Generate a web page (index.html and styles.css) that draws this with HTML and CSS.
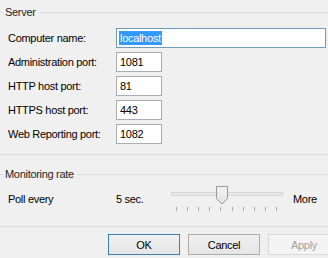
FILE: index.html
```html
<!DOCTYPE html>
<html>
<head>
    <meta charset="UTF-8">
    <title>Server settings</title>
    <link rel="stylesheet" href="styles.css">
</head>
<body>
    <div class="dialog">
        <div class="legend"><span>Server</span></div>
        <div class="fields">
            <div class="label">Computer name:</div>
            <div class="box wide focus"><span class="sel">localhost</span></div>
            <div class="label">Administration port:</div>
            <div class="box">1081</div>
            <div class="label">HTTP host port:</div>
            <div class="box">81</div>
            <div class="label">HTTPS host port:</div>
            <div class="box">443</div>
            <div class="label">Web Reporting port:</div>
            <div class="box">1082</div>
        </div>
        <div class="rule server-end"></div>

        <div class="legend monitor"><span>Monitoring rate</span></div>
        <div class="poll">
            <div class="label">Poll every</div>
            <div class="value">5 sec.</div>
            <div class="slider">
                <div class="track"></div>
                <svg class="thumb" width="12" height="19" viewBox="0 0 12 19">
                    <defs>
                        <linearGradient id="tg" x1="0" y1="0" x2="0" y2="1">
                            <stop offset="0" stop-color="#f2f2f2"/>
                            <stop offset="1" stop-color="#e2e2e2"/>
                        </linearGradient>
                    </defs>
                    <path d="M0.5 0.5 H11.5 V12.5 L6 18 L0.5 12.5 Z" fill="url(#tg)" stroke="#9a9a9a"/>
                </svg>
                <div class="ticks">
                    <i></i><i></i><i></i><i></i><i></i><i></i><i></i><i></i><i></i><i></i>
                </div>
            </div>
            <div class="more">More</div>
        </div>
        <div class="rule monitor-end"></div>

        <div class="buttons">
            <button class="btn default">OK</button>
            <button class="btn">Cancel</button>
            <button class="btn" disabled>Apply</button>
        </div>
    </div>
</body>
</html>
```

FILE: styles.css
```css
html, body {
    margin: 0;
    padding: 0;
    background: #f0f0f0;
}
body {
    width: 328px;
    height: 258px;
    overflow: hidden;
    font-family: "Liberation Sans", Arial, sans-serif;
    font-size: 11px;
    letter-spacing: -0.3px;
    color: #000;
}
.dialog {
    display: flex;
    flex-direction: column;
}

/* group box headers */
.legend {
    display: flex;
    align-items: center;
    gap: 2px;
    height: 24px;
    color: #1e1e1e;
}
.legend::before {
    content: "";
    width: 3px;
    height: 1px;
    background: #dcdcdc;
}
.legend::after {
    content: "";
    flex: 1;
    height: 1px;
    margin-left: 1px;
    background: #dcdcdc;
}
.legend.monitor {
    height: 22px;
    margin-top: 8px;
}
.rule {
    height: 1px;
    background: #dcdcdc;
}
.server-end {
    margin-top: 10px;
}
.monitor-end {
    margin-top: 14px;
}

/* server fields */
.fields {
    display: grid;
    grid-template-columns: 108px auto;
    grid-auto-rows: 20px;
    row-gap: 4px;
    margin-top: 4px;
    padding-left: 8px;
    align-items: center;
}
.box {
    box-sizing: border-box;
    width: 46px;
    height: 20px;
    padding: 2px 0 0 3px;
    background: #fff;
    border: 1px solid #abadb3;
    line-height: 14px;
}
.box.wide {
    width: 210px;
    padding-left: 2px;
}
.box.focus {
    border-color: #709cbb;
}
.sel {
    display: inline-block;
    background: #3399ff;
    color: #fff;
    padding: 0 1px;
}

/* monitoring rate */
.poll {
    display: grid;
    grid-template-columns: 108px 55px 112px auto;
    height: 26px;
    margin-top: 1px;
    padding-left: 8px;
    align-items: center;
}
.slider {
    position: relative;
    height: 26px;
}
.track {
    margin: 6px 0 0;
    height: 2px;
    background: #e7eaea;
    border: 1px solid #d6d6d6;
}
.thumb {
    position: absolute;
    left: 45px;
    top: 0;
}
.ticks {
    position: absolute;
    left: 5px;
    right: 6px;
    top: 21px;
    display: flex;
    justify-content: space-between;
}
.ticks i {
    width: 1px;
    height: 4px;
    background: #a8a8a8;
}
.more {
    padding-left: 10px;
}

/* dialog buttons */
.buttons {
    display: flex;
    gap: 8px;
    margin-top: 7px;
    padding-left: 108px;
}
.btn {
    flex: none;
    width: 72px;
    height: 21px;
    padding: 0;
    font: inherit;
    letter-spacing: inherit;
    color: #000;
    background: linear-gradient(#f0f0f0, #e5e5e5);
    border: 1px solid #acacac;
    border-radius: 0;
}
.btn.default {
    border-color: #3c7fb1;
}
.btn:disabled {
    color: #a3a3a3;
    background: #f4f4f4;
    border-color: #d9d9d9;
}
```
